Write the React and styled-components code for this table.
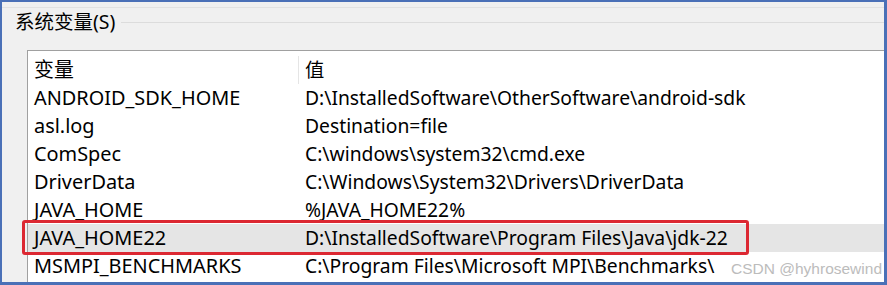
import styled, { createGlobalStyle } from "styled-components"

const GlobalStyle = createGlobalStyle`
  html, body {
    margin: 0;
    padding: 0;
    background: #f0f0f0;
  }
`

const FONT = `"Noto Sans", "Noto Sans CJK SC", sans-serif`

const Frame = styled.div`
  position: relative;
  box-sizing: border-box;
  width: 887px;
  height: 285px;
  border-style: solid;
  border-color: #4a70b7;
  border-width: 2px 3px 3px 2px;
  background: #f0f0f0;
  overflow: hidden;
  display: flex;
  flex-direction: column;
  font-family: ${FONT};
  color: #000;
`

const TopRule = styled.div`
  height: 1px;
  margin-top: 5px;
  background: #e2e2e2;
`

const GroupHeader = styled.div`
  display: flex;
  align-items: center;
  height: 28px;
  padding-left: 13px;
  gap: 6px;
`

const GroupTitle = styled.span`
  font-size: 19.5px;
  line-height: 28px;
  white-space: nowrap;
`

const GroupLine = styled.div`
  flex: 1;
  height: 1px;
  background: #dcdcdc;
`

const ListView = styled.div`
  position: relative;
  margin: 14px 0 0 25px;
  border-top: 1px solid #a0a0a0;
  border-left: 1px solid #a0a0a0;
  background: #fff;
  flex: 1;
`

const Row = styled.div`
  position: relative;
  display: grid;
  grid-template-columns: 270px 1fr;
  height: ${p => (p.$header ? "33px" : "28px")};
  align-items: ${p => (p.$header ? "end" : "center")};
  background: ${p => (p.$selected ? "#e5e5e5" : "transparent")};
  white-space: nowrap;
`

const Cell = styled.div`
  padding-left: ${p => (p.$value ? "6px" : "5px")};
  font-size: ${p => (p.$value ? "19.3px" : "19.9px")};
  line-height: 28px;
  border-left: ${p => (p.$value && p.$header ? "1px solid #e5e5e5" : "1px solid transparent")};
  height: 28px;
`

const Highlight = styled.div`
  position: absolute;
  left: -6px;
  top: -4px;
  width: 727px;
  height: 35px;
  box-sizing: border-box;
  border: 3px solid #dc2832;
  border-radius: 3px;
  pointer-events: none;
`

const Watermark = styled.span`
  position: absolute;
  right: 2px;
  bottom: 4px;
  font-family: "Liberation Sans", sans-serif;
  font-size: 15.5px;
  color: #bcbcbc;
`

const rows = [
  ["ANDROID_SDK_HOME", "D:\\InstalledSoftware\\OtherSoftware\\android-sdk"],
  ["asl.log", "Destination=file"],
  ["ComSpec", "C:\\windows\\system32\\cmd.exe"],
  ["DriverData", "C:\\Windows\\System32\\Drivers\\DriverData"],
  ["JAVA_HOME", "%JAVA_HOME22%"],
  ["JAVA_HOME22", "D:\\InstalledSoftware\\Program Files\\Java\\jdk-22", true],
  ["MSMPI_BENCHMARKS", "C:\\Program Files\\Microsoft MPI\\Benchmarks\\"],
]

export default function App() {
  return (
    <>
      <GlobalStyle />
      <Frame>
        <TopRule />
        <GroupHeader>
          <GroupTitle>系统变量(S)</GroupTitle>
          <GroupLine />
        </GroupHeader>
        <ListView>
          <Row $header>
            <Cell $header>变量</Cell>
            <Cell $header $value>值</Cell>
          </Row>
          {rows.map(([name, value, selected]) => (
            <Row key={name} $selected={selected}>
              <Cell>{name}</Cell>
              <Cell $value>{value}</Cell>
              {selected && <Highlight />}
            </Row>
          ))}
        </ListView>
        <Watermark>CSDN @hyhrosewind</Watermark>
      </Frame>
    </>
  )
}
